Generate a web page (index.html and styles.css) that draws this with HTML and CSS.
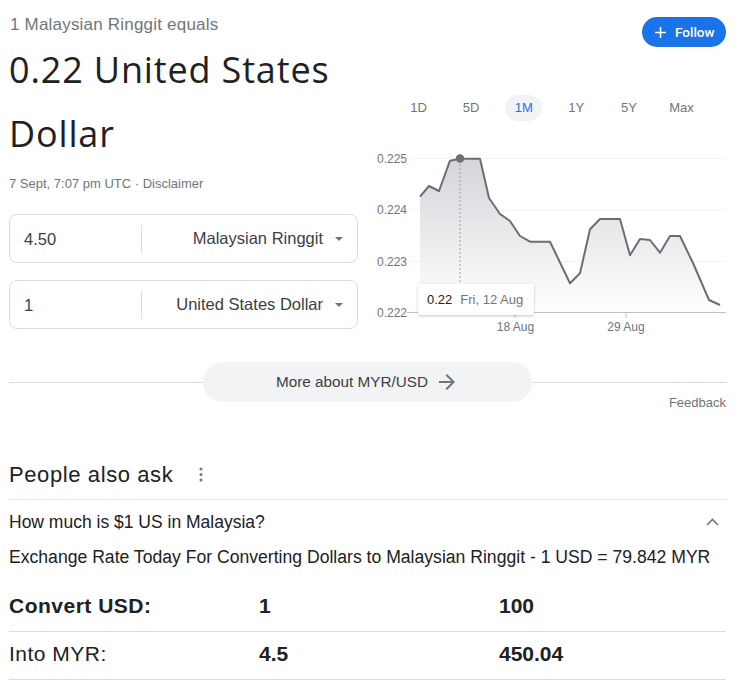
FILE: index.html
```html
<!DOCTYPE html>
<html lang="en">
<head>
<meta charset="utf-8">
<title>MYR to USD</title>
<link rel="stylesheet" href="styles.css">
</head>
<body>
<div class="page">
  <div class="top">
    <div class="left">
      <div class="eq">1 Malaysian Ringgit equals</div>
      <div class="big">0.22 United States Dollar</div>
      <div class="meta">7 Sept, 7:07 pm UTC · <span class="disc">Disclaimer</span></div>
      <div class="conv">
        <div class="cbox">
          <div class="val">4.50</div>
          <div class="sel">Malaysian Ringgit<span class="caret"></span></div>
        </div>
        <div class="cbox">
          <div class="val">1</div>
          <div class="sel">United States Dollar<span class="caret"></span></div>
        </div>
      </div>
    </div>
    <div class="right">
      <div class="follow-row">
        <div class="follow">
          <svg class="plus" width="11" height="11" viewBox="0 0 11 11"><path d="M5.5 0v11M0 5.5h11" stroke="#fff" stroke-width="1.6"/></svg>
          <span>Follow</span>
        </div>
      </div>
      <div class="tabs">
        <span class="tab">1D</span>
        <span class="tab">5D</span>
        <span class="tab on">1M</span>
        <span class="tab">1Y</span>
        <span class="tab">5Y</span>
        <span class="tab">Max</span>
      </div>
      <div class="chart">
        <svg class="plot" width="360" height="200" viewBox="366 140 360 200">
          <defs>
            <linearGradient id="g" x1="0" y1="0" x2="0" y2="1">
              <stop offset="0" stop-color="#d3d5d9"/>
              <stop offset="1" stop-color="#ffffff"/>
            </linearGradient>
          </defs>
          <g stroke="#f1f3f4" stroke-width="1">
            <line x1="410" y1="158.5" x2="726" y2="158.5"/>
            <line x1="410" y1="210" x2="726" y2="210"/>
            <line x1="410" y1="261.5" x2="726" y2="261.5"/>
          </g>
          <polygon fill="url(#g)" points="420,196.7 429,186 439,191 450,160.7 460,158.7 480,158.7 489,198 500,214 510,221 520,236 530,241.7 550,241.7 570,283.3 580,273.3 590,229.3 600,219 620,219 630,255.3 640,239 650,240 660,252.7 670,236 680,236 693,263 709,300 720,305 720,312.5 420,312.5"/>
          <line x1="407" y1="312.5" x2="726" y2="312.5" stroke="#bdc1c6" stroke-width="1"/>
          <line x1="515" y1="312.5" x2="515" y2="318" stroke="#bdc1c6" stroke-width="1"/>
          <line x1="626" y1="312.5" x2="626" y2="318" stroke="#bdc1c6" stroke-width="1"/>
          <line x1="460" y1="160" x2="460" y2="285" stroke="#9aa0a6" stroke-width="1" stroke-dasharray="2 2"/>
          <polyline fill="none" stroke="#6b6e72" stroke-width="2" stroke-linejoin="round" points="420,196.7 429,186 439,191 450,160.7 460,158.7 480,158.7 489,198 500,214 510,221 520,236 530,241.7 550,241.7 570,283.3 580,273.3 590,229.3 600,219 620,219 630,255.3 640,239 650,240 660,252.7 670,236 680,236 693,263 709,300 720,305"/>
          <circle cx="460" cy="158.5" r="4.2" fill="#6b6e72"/>
          <g class="ylab">
            <text x="407" y="162.5" text-anchor="end">0.225</text>
            <text x="407" y="214" text-anchor="end">0.224</text>
            <text x="407" y="265.5" text-anchor="end">0.223</text>
            <text x="407" y="316.5" text-anchor="end">0.222</text>
            <text x="515.5" y="331" text-anchor="middle">18 Aug</text>
            <text x="626" y="331" text-anchor="middle">29 Aug</text>
          </g>
        </svg>
        <div class="tip"><span class="tv">0.22</span><span class="td">Fri, 12 Aug</span></div>
      </div>
    </div>
  </div>

  <div class="more-row">
    <span class="rule"></span>
    <div class="more">
      <span>More about MYR/USD</span>
      <svg width="16" height="16" viewBox="4 4 16 16"><path d="M12 4l-1.41 1.41L16.17 11H4v2h12.17l-5.58 5.59L12 20l8-8z" fill="#70757a"/></svg>
    </div>
    <span class="rule"></span>
  </div>
  <div class="feedback">Feedback</div>

  <section class="paa">
    <div class="paa-head">
      <span>People also ask</span>
      <svg class="dots" width="4" height="16" viewBox="0 0 4 16"><circle cx="2" cy="2" r="1.5" fill="#70757a"/><circle cx="2" cy="7.5" r="1.5" fill="#70757a"/><circle cx="2" cy="13" r="1.5" fill="#70757a"/></svg>
    </div>
    <div class="q">
      <span>How much is $1 US in Malaysia?</span>
      <svg width="13" height="8" viewBox="0 0 13 8"><path d="M1 7l5.5-5.5L12 7" fill="none" stroke="#70757a" stroke-width="1.6"/></svg>
    </div>
    <div class="ans">Exchange Rate Today For Converting Dollars to Malaysian Ringgit - 1 USD = 79.842 MYR</div>
    <table class="ct">
      <tr><td class="c1 b">Convert USD:</td><td class="c2 b">1</td><td class="b">100</td></tr>
      <tr><td class="c1">Into MYR:</td><td class="c2 b">4.5</td><td class="b">450.04</td></tr>
    </table>
  </section>
</div>
</body>
</html>
```
FILE: styles.css
```css
* { box-sizing: border-box; }
html, body { margin: 0; padding: 0; background: #fff; }
body {
  font-family: "Liberation Sans", Arial, sans-serif;
  color: #202124;
}
.page {
  width: 748px;
  padding: 0 22px 0 9px;
}
.top {
  display: flex;
  gap: 8px;
}
.left {
  width: 349px;
  padding-top: 14px;
}
.eq {
  font-size: 17px;
  line-height: 22px;
  color: #70757a;
  letter-spacing: 0.2px;
  padding-left: 1px;
}
.big {
  margin-top: 2px;
  font-family: "Open Sans", sans-serif;
  font-size: 36px;
  line-height: 64px;
  color: #202124;
  letter-spacing: 0.85px;
}
.meta {
  margin-top: 10px;
  font-size: 13px;
  line-height: 16px;
  color: #70757a;
}
.conv {
  margin-top: 22px;
  display: flex;
  flex-direction: column;
  gap: 17px;
}
.cbox {
  height: 49px;
  border: 1px solid #dadce0;
  border-radius: 8px;
  display: flex;
  align-items: center;
  font-size: 16.5px;
  color: #3c4043;
}
.val {
  width: 132px;
  padding-left: 14px;
  height: 28px;
  line-height: 28px;
  border-right: 1px solid #dadce0;
}
.sel {
  flex: 1;
  display: flex;
  justify-content: flex-end;
  align-items: center;
  padding-right: 14px;
}
.caret {
  margin-left: 12px;
  width: 0;
  height: 0;
  border-left: 4.5px solid transparent;
  border-right: 4.5px solid transparent;
  border-top: 4.5px solid #70757a;
}
.right {
  width: 360px;
  padding-top: 17px;
}
.follow-row {
  display: flex;
  justify-content: flex-end;
}
.follow {
  height: 30px;
  width: 84px;
  border-radius: 15px;
  background: #1a73e8;
  color: #fff;
  display: flex;
  align-items: center;
  padding-left: 13px;
  gap: 9px;
  font-family: Roboto, "Liberation Sans", sans-serif;
  font-weight: 500;
  font-size: 13.5px;
}
.tabs {
  margin-top: 48px;
  margin-left: 34px;
  display: flex;
  gap: 15.6px;
}
.tab {
  width: 37px;
  height: 26px;
  line-height: 26px;
  border-radius: 13px;
  text-align: center;
  font-size: 13px;
  color: #70757a;
}
.tab.on {
  background: #f1f3f4;
  color: #1a73e8;
}
.chart {
  margin-top: 19px;
  position: relative;
  height: 200px;
}
.plot { display: block; }
.ylab text {
  font-family: "Liberation Sans", Arial, sans-serif;
  font-size: 12px;
  fill: #70757a;
}
.tip {
  position: absolute;
  left: 52px;
  top: 144px;
  width: 116px;
  height: 31px;
  background: #fff;
  border-radius: 2px;
  box-shadow: 0 1px 3px rgba(60, 64, 67, 0.3);
  display: flex;
  align-items: center;
  padding-left: 9px;
  gap: 8px;
  font-size: 13px;
}
.tv { color: #202124; }
.td { color: #70757a; }
.more-row {
  margin-top: 22px;
  height: 40px;
  display: flex;
  align-items: center;
}
.rule {
  flex: 1;
  height: 1px;
  background: #dadce0;
}
.more {
  width: 329px;
  height: 40px;
  border-radius: 20px;
  background: #f1f3f4;
  display: flex;
  align-items: center;
  justify-content: center;
  gap: 11px;
  font-size: 15.3px;
  color: #3c4043;
  padding-right: 4px;
}
.more svg { display: block; }
.feedback {
  margin-top: -7px;
  text-align: right;
  font-size: 13px;
  line-height: 16px;
  color: #70757a;
}
.paa {
  margin-top: 50px;
}
.paa-head {
  display: flex;
  align-items: center;
  gap: 26px;
  font-size: 22px;
  line-height: 28px;
  letter-spacing: 0.6px;
  padding-bottom: 10px;
  border-bottom: 1px solid #e8eaed;
}
.dots { display: block; }
.q {
  padding-top: 10px;
  display: flex;
  justify-content: space-between;
  align-items: center;
  font-size: 17.5px;
  line-height: 24px;
  padding-right: 7px;
}
.ans {
  margin-top: 11px;
  font-size: 17.6px;
  line-height: 24px;
}
.ct {
  margin-top: 15px;
  width: 100%;
  border-collapse: collapse;
  font-size: 21px;
  line-height: 26px;
}
.ct td {
  padding: 9px 0 12px;
  border-bottom: 1px solid #dadce0;
  vertical-align: top;
}
.ct .c1 { width: 250px; letter-spacing: 0.5px; }
.ct .c2 { width: 240px; }
.b { font-weight: bold; }
```
